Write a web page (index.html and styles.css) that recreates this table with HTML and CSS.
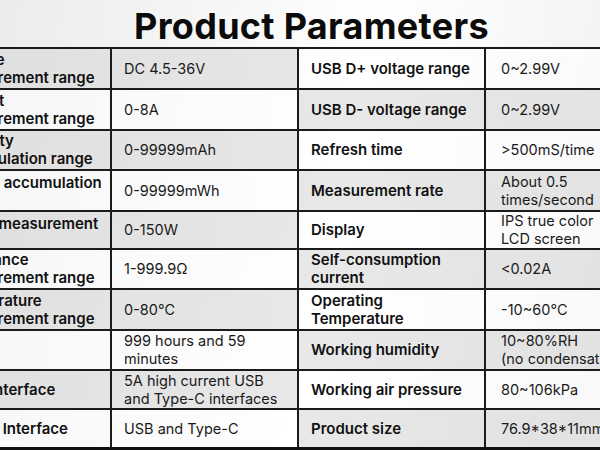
FILE: index.html
```html
<!DOCTYPE html>
<html>
<head>
<meta charset="utf-8">
<link rel="stylesheet" href="styles.css">
</head>
<body>
<div class="page">
  <h1 class="title">Product Parameters</h1>
  <div class="tables">
    <div class="block left">
      <div class="cell label gray r1">Voltage<br>measurement range</div>
      <div class="cell value gray r1">DC 4.5-36V</div>
      <div class="cell label r2">Current<br>measurement range</div>
      <div class="cell value r2">0-8A</div>
      <div class="cell label gray r3">Capacity<br>accumulation range</div>
      <div class="cell value gray r3">0-99999mAh</div>
      <div class="cell label top r4">Energy accumulation<br>range</div>
      <div class="cell value r4">0-99999mWh</div>
      <div class="cell label gray top r5">Power measurement<br>range</div>
      <div class="cell value gray r5">0-150W</div>
      <div class="cell label r6">Resistance<br>measurement range</div>
      <div class="cell value r6">1-999.9Ω</div>
      <div class="cell label gray r7">Temperature<br>measurement range</div>
      <div class="cell value gray r7">0-80℃</div>
      <div class="cell label r8">Timing</div>
      <div class="cell value r8">999 hours and 59<br>minutes</div>
      <div class="cell label gray r9">Input Interface</div>
      <div class="cell value gray r9">5A high current USB<br>and Type-C interfaces</div>
      <div class="cell label r10">Output Interface</div>
      <div class="cell value r10">USB and Type-C</div>
    </div>
    <div class="block right">
      <div class="cell label r1">USB D+ voltage range</div>
      <div class="cell value r1">0~2.99V</div>
      <div class="cell label gray r2">USB D- voltage range</div>
      <div class="cell value gray r2">0~2.99V</div>
      <div class="cell label r3">Refresh time</div>
      <div class="cell value r3">&gt;500mS/time</div>
      <div class="cell label gray r4">Measurement rate</div>
      <div class="cell value gray r4">About 0.5<br>times/second</div>
      <div class="cell label r5">Display</div>
      <div class="cell value r5">IPS true color<br>LCD screen</div>
      <div class="cell label gray r6">Self-consumption<br>current</div>
      <div class="cell value gray r6">&lt;0.02A</div>
      <div class="cell label r7">Operating<br>Temperature</div>
      <div class="cell value r7">-10~60°C</div>
      <div class="cell label gray r8">Working humidity</div>
      <div class="cell value gray r8">10~80%RH<br>(no condensation)</div>
      <div class="cell label r9">Working air pressure</div>
      <div class="cell value r9">80~106kPa</div>
      <div class="cell label gray r10">Product size</div>
      <div class="cell value gray r10">76.9*38*11mm</div>
    </div>
  </div>
</div>
</body>
</html>
```

FILE: styles.css
```css
html, body {
  margin: 0;
  padding: 0;
}
body {
  width: 600px;
  height: 450px;
  overflow: hidden;
  background: linear-gradient(100deg, #ececec 0%, #f7f7f7 35%, #ffffff 55%, #f1f1f1 100%);
  font-family: Inter, "Noto Sans", sans-serif;
  color: #111;
}
.page {
  display: flex;
  flex-direction: column;
}
.title {
  margin: 0;
  height: 47px;
  padding-left: 23px;
  text-align: center;
  font-size: 36px;
  line-height: 52px;
  font-weight: 700;
  letter-spacing: 0.3px;
  color: #0b0b0b;
}
.tables {
  display: flex;
  margin-left: -62px;
  border-top: 2px solid #1b1b1b;
  border-bottom: 3px solid #111;
}
.block {
  display: grid;
  grid-template-rows: 41px 41px 40px 41px 38px 40px 41px 40px 39px 37px;
}
.left {
  grid-template-columns: 174px 187px;
}
.right {
  grid-template-columns: 187px 220px;
}
.cell {
  box-sizing: border-box;
  display: flex;
  align-items: center;
  border-right: 2px solid #1b1b1b;
  border-bottom: 2px solid #1b1b1b;
  background: rgba(255, 255, 255, 0.55);
  line-height: 18px;
}
.r10 {
  border-bottom: none;
}
.cell.gray {
  background: rgba(214, 214, 214, 0.55);
}
.label {
  font-weight: 600;
  font-size: 15px;
  padding-left: 11px;
}
.label.top {
  align-items: flex-start;
  padding-top: 3px;
}
.value {
  font-size: 14.5px;
  font-weight: 400;
  padding-left: 12px;
  color: #1a1a1a;
}
.right .value {
  padding-left: 15px;
}
.right .label {
  padding-left: 12px;
}
```
